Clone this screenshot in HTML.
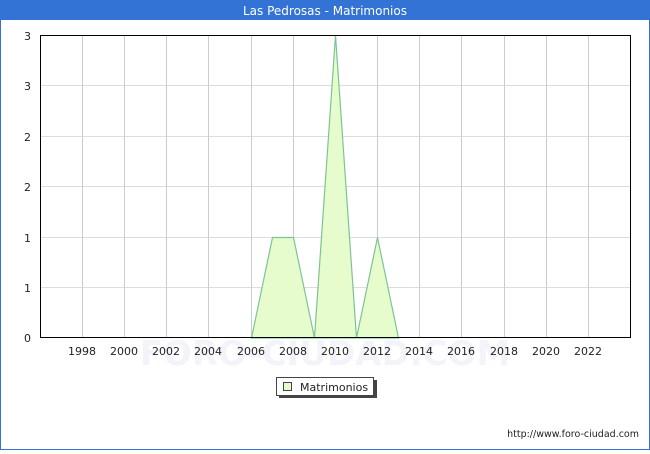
<!DOCTYPE html>
<html><head><meta charset="utf-8"><style>
body{margin:0;width:650px;height:450px;overflow:hidden;background:#fff;font-family:"DejaVu Sans","Liberation Sans",sans-serif}
</style></head><body>
<svg width="650" height="450" xmlns="http://www.w3.org/2000/svg" font-family="DejaVu Sans, Liberation Sans, sans-serif">
<rect x="0.5" y="0.5" width="649" height="449" fill="#fff" stroke="#3373d6"/>
<rect x="0" y="0" width="650" height="20" fill="#3373d6"/>
<text x="325" y="15" fill="#fff" font-size="12" text-anchor="middle">Las Pedrosas - Matrimonios</text>
<g stroke="#dddddd" stroke-width="1">
<line x1="40" y1="85.5" x2="631" y2="85.5"/><line x1="40" y1="136.5" x2="631" y2="136.5"/>
<line x1="40" y1="186.5" x2="631" y2="186.5"/><line x1="40" y1="237.5" x2="631" y2="237.5"/>
<line x1="40" y1="287.5" x2="631" y2="287.5"/>
</g>
<g stroke="#cccccc" stroke-width="1">
<line x1="82.5" y1="35" x2="82.5" y2="338"/><line x1="124.5" y1="35" x2="124.5" y2="338"/>
<line x1="166.5" y1="35" x2="166.5" y2="338"/><line x1="208.5" y1="35" x2="208.5" y2="338"/>
<line x1="251.5" y1="35" x2="251.5" y2="338"/><line x1="293.5" y1="35" x2="293.5" y2="338"/>
<line x1="335.5" y1="35" x2="335.5" y2="338"/><line x1="377.5" y1="35" x2="377.5" y2="338"/>
<line x1="419.5" y1="35" x2="419.5" y2="338"/><line x1="461.5" y1="35" x2="461.5" y2="338"/>
<line x1="504.5" y1="35" x2="504.5" y2="338"/><line x1="546.5" y1="35" x2="546.5" y2="338"/>
<line x1="588.5" y1="35" x2="588.5" y2="338"/>
</g>
<text x="325" y="365" fill="#f3f4fa" font-size="34" text-anchor="middle" font-weight="bold">FORO-CIUDAD.COM</text>
<polygon points="251.5,338 272.5,237.5 293.5,237.5 314.5,338 335.5,35.5 356.5,338 377.5,237.5 398.5,338" fill="#e6fccc" stroke="#7cc496" stroke-width="1.2"/>
<rect x="40.5" y="35.5" width="590" height="302" fill="none" stroke="#000" stroke-width="1"/>
<g font-size="11" fill="#222" text-anchor="end">
<text x="31" y="40">3</text><text x="31" y="90">3</text><text x="31" y="141">2</text>
<text x="31" y="191">2</text><text x="31" y="242">1</text><text x="31" y="292">1</text><text x="31" y="342">0</text>
</g>
<g font-size="11" fill="#222" text-anchor="middle">
<text x="82" y="355">1998</text><text x="124" y="355">2000</text><text x="166" y="355">2002</text>
<text x="208" y="355">2004</text><text x="251" y="355">2006</text><text x="293" y="355">2008</text>
<text x="335" y="355">2010</text><text x="377" y="355">2012</text><text x="419" y="355">2014</text>
<text x="461" y="355">2016</text><text x="504" y="355">2018</text><text x="546" y="355">2020</text>
<text x="588" y="355">2022</text>
</g>
<rect x="279" y="380" width="98" height="18" fill="#444"/>
<rect x="276.5" y="377.5" width="97" height="18" fill="#fff" stroke="#444"/>
<rect x="283.5" y="382.5" width="8" height="8" fill="#e6fccc" stroke="#444"/>
<text x="300" y="391" font-size="11" fill="#222">Matrimonios</text>
<text x="639" y="437" font-size="9.5" fill="#222" text-anchor="end">http://www.foro-ciudad.com</text>
</svg>
</body></html>
